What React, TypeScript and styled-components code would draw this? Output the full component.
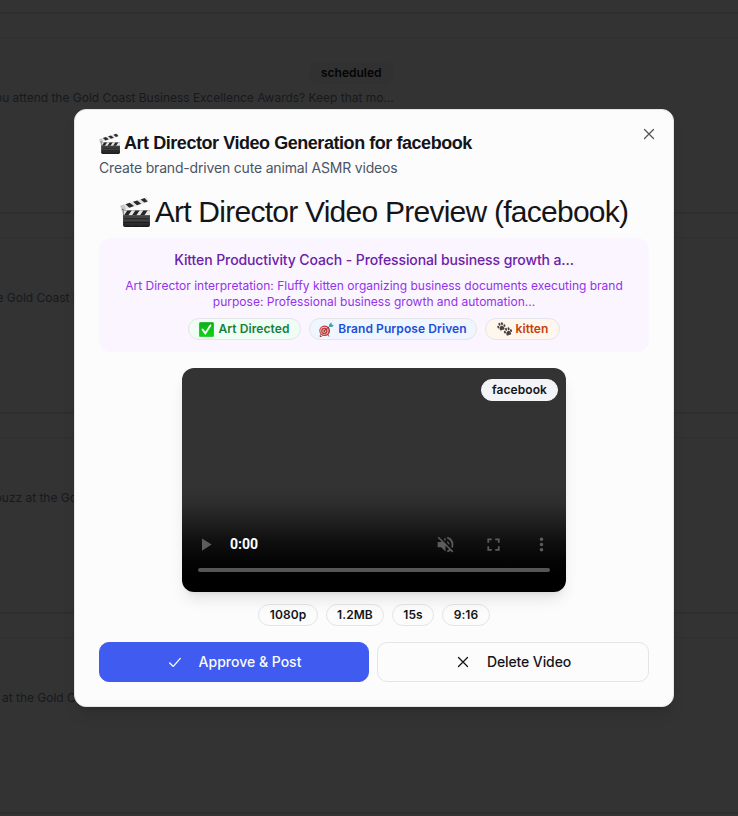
import React from 'react';
import styled, { createGlobalStyle } from 'styled-components';

const Global = createGlobalStyle`
  * { box-sizing: border-box; }
  body { margin: 0; background: #333; overflow: hidden; font-family: Inter, sans-serif; color: #141519; }
  h1, h2, h3, p { margin: 0; }
  button { font: inherit; }
`;

const Screen = styled.div`
  position: relative;
  width: 738px;
  height: 816px;
  overflow: hidden;
  background: #333;
`;
const Feed = styled.div`
  display: flex;
  flex-direction: column;
  gap: 24px;
  height: 816px;
  overflow: hidden;
`;
const Post = styled.article`
  flex: 0 0 176px;
  padding-top: 24px;
  border-top: 1px solid #2f2f30;
  border-bottom: 1px solid #2d2d2e;
  box-shadow: 0 1px 2px rgba(0, 0, 0, .05);
`;
const PostTail = styled(Post)`
  flex-basis: 13px;
  padding: 0;
  border-top: 0;
`;
const PostTop = styled.div`
  display: flex;
  height: 22px;
  padding-left: 309px;
`;
const Status = styled.span`
  height: 22px;
  padding: 0 12px;
  border-radius: 11px;
  background: #313131;
  color: #040405;
  font-size: 12px;
  font-weight: 600;
  line-height: 22px;
`;
const PostText = styled.p<{ $shift: number }>`
  margin: 6px 0 0 ${p => p.$shift}px;
  color: #17191d;
  font-size: 12px;
  line-height: 16px;
  white-space: nowrap;
  letter-spacing: -0.02px;
`;

const Overlay = styled.div`
  position: absolute;
  inset: 0 -10px 0 0;
  display: grid;
  place-items: center;
`;
const Dialog = styled.section`
  position: relative;
  display: flex;
  flex-direction: column;
  gap: 16px;
  width: 600px;
  height: 598px;
  padding: 24px;
  border: 1px solid #e4e5e8;
  border-radius: 12px;
  background: #fcfcfc;
  box-shadow: 0 10px 15px -3px rgba(0, 0, 0, .1), 0 4px 6px -4px rgba(0, 0, 0, .1);
`;
const CloseButton = styled.button`
  position: absolute;
  top: 16px;
  right: 16px;
  display: flex;
  padding: 0;
  border: 0;
  background: none;
  color: #55565a;
`;
const Header = styled.header`
  display: flex;
  flex-direction: column;
  gap: 6px;
`;
const Title = styled.h2`
  display: flex;
  align-items: center;
  gap: 4px;
  height: 18px;
  font: 700 18px/18px "Liberation Sans", sans-serif;
  letter-spacing: -0.45px;
  white-space: nowrap;
`;
const Subtitle = styled.p`
  color: #4b5565;
  font-size: 14px;
  line-height: 20px;
  letter-spacing: -0.18px;
`;
const Intro = styled.div`
  display: flex;
  flex-direction: column;
  gap: 8px;
`;
const Heading = styled.h1`
  display: flex;
  align-items: center;
  justify-content: center;
  gap: 5px;
  font: 400 30px/36px "Liberation Sans", sans-serif;
  letter-spacing: -0.75px;
  white-space: nowrap;
`;
const Brief = styled.div`
  display: flex;
  flex-direction: column;
  align-items: center;
  gap: 8px;
  height: 114px;
  padding: 12px;
  border-radius: 12px;
  background: #faf5ff;
  text-align: center;
`;
const BriefTitle = styled.h3`
  color: #6b21a8;
  font-size: 14px;
  font-weight: 500;
  line-height: 20px;
  letter-spacing: -0.1px;
`;
const BriefText = styled.p`
  color: #9333ea;
  font-size: 12px;
  line-height: 16px;
  letter-spacing: 0.01px;
  white-space: nowrap;
`;
const BadgeRow = styled.div`
  display: flex;
  justify-content: center;
  gap: 8px;
`;
const Badge = styled.span<{ $bg?: string; $color?: string; $width: number; $border?: string }>`
  display: inline-flex;
  align-items: center;
  justify-content: center;
  gap: 4px;
  width: ${p => p.$width}px;
  height: 22px;
  border: 1px solid ${p => p.$border ?? '#e4e5e8'};
  border-radius: 11px;
  background: ${p => p.$bg ?? 'transparent'};
  color: ${p => p.$color ?? '#141519'};
  font-size: 12px;
  font-weight: 600;
  line-height: 16px;
  letter-spacing: 0.08px;
  white-space: nowrap;
`;
const Player = styled.div`
  position: relative;
  display: flex;
  flex-direction: column;
  justify-content: flex-end;
  align-self: center;
  width: 384px;
  height: 224px;
  padding: 0 16px 20px;
  border-radius: 12px;
  background: linear-gradient(#333 0, #333 118px, #2d2d2d 136px, #1e1e1e 156px, #101010 172px, #050505 192px, #000 210px);
  box-shadow: 0 10px 15px -3px rgba(0, 0, 0, .1), 0 4px 6px -4px rgba(0, 0, 0, .1);
`;
const PlatformTag = styled.div`
  position: absolute;
  top: 11px;
  right: 8px;
  display: flex;
`;
const Controls = styled.div`
  display: flex;
  align-items: center;
  height: 24px;
  margin: 0 -2px 12px -3px;
  color: #5c5c5c;
`;
const Time = styled.span`
  flex: 1;
  margin-left: 14px;
  color: #fff;
  font: 700 14px/24px Roboto, sans-serif;
`;
const ControlIcons = styled.div`
  display: flex;
  gap: 27px;
`;
const Track = styled.div`
  height: 4px;
  border-radius: 2px;
  background: #555;
`;
const Footer = styled.footer`
  display: flex;
  flex-direction: column;
  gap: 16px;
  margin-top: -4px;
`;
const Actions = styled.div`
  display: grid;
  grid-template-columns: 270px 272px;
  gap: 8px;
`;
const Action = styled.button<{ $primary?: boolean }>`
  display: flex;
  align-items: center;
  justify-content: center;
  gap: 16px;
  height: 40px;
  padding: 0 0 1px;
  border: 1px solid ${p => (p.$primary ? '#405cf0' : '#e4e5e8')};
  border-radius: 10px;
  background: ${p => (p.$primary ? '#405cf0' : '#fcfcfc')};
  color: ${p => (p.$primary ? '#fbfbff' : '#141519')};
  font-size: 14px;
  font-weight: 500;
  letter-spacing: ${p => (p.$primary ? 0 : -0.1)}px;
`;

const Clapper = ({ size }: { size: number }) => (
  <svg width={size} height={size} viewBox="0 0 30 30">
    <defs>
      <linearGradient id={`slate${size}`} x2="0" y2="1">
        <stop stopColor="#202020" /><stop offset=".5" stopColor="#4c4c4c" /><stop offset="1" stopColor="#191919" />
      </linearGradient>
    </defs>
    <path d="M.3 8.8 27 .3l1.3 4.6L5 12.6l-3 2.2z" fill="#e4e4e2" />
    <path d="m5.5 7.2 4.2-1.4 4.3 3.3-4.6 1.6zM13 4.8l4.2-1.4 4 3.3-4.2 1.5zM20.6 2.4l4-1.3 3.1 3.3-3.4 1.2z" fill="#2b2b2b" />
    <path d="M.3 8.8 4 7.6l2.5 6L3 18z" fill="#c4c8c7" />
    <circle cx="2.8" cy="12.5" r=".8" fill="#555" />
    <path d="M3 13.5h27V28q0 2-2 2H5q-2 0-2-2z" fill={`url(#slate${size})`} />
    <path d="M3.5 13.5H30v4.7H3.5z" fill="#e6e6e4" />
    <path d="M7.3 13.5h4.3l-3.2 4.7H4.1zM15.3 13.5h4.3l-3.2 4.7h-4.3zM23.3 13.5h4.3l-3.2 4.7h-4.3z" fill="#262626" />
    <path d="M4 21.8h25M4 25.4h25" stroke="#171717" strokeWidth=".9" />
    <path d="M11 25.5V29M20 25.5V29" stroke="#333" strokeWidth=".7" />
  </svg>
);
const CheckEmoji = () => (
  <svg width="15" height="15" viewBox="0 0 15 15">
    <defs><linearGradient id="green" x2="0" y2="1"><stop stopColor="#0dae18" /><stop offset="1" stopColor="#08d90d" /></linearGradient></defs>
    <rect x=".2" y=".2" width="14.6" height="14.6" rx="1.5" fill="url(#green)" stroke="#20a42a" strokeWidth=".4" />
    <path d="m3.6 7.6 2.7 3.8 5.1-8" fill="none" stroke="#fff" strokeWidth="1.9" strokeLinecap="round" />
  </svg>
);
const TargetEmoji = () => (
  <svg width="15" height="15" viewBox="0 0 15 15">
    <path d="m1.5 12.5-.5 2h1.5l1-1M9 13l1 1.5" stroke="#9b493d" fill="none" />
    <ellipse cx="5.7" cy="8.8" rx="5.4" ry="5.2" fill="#c03434" />
    <ellipse cx="5.4" cy="8.8" rx="4.1" ry="4" fill="#e6cfcd" />
    <ellipse cx="5.3" cy="8.9" rx="3.2" ry="3.1" fill="#c33a3b" />
    <ellipse cx="5.2" cy="9" rx="1.8" ry="1.7" fill="#ead8d6" />
    <circle cx="5.2" cy="9" r=".9" fill="#b72b30" />
    <path d="m5.2 9 6.3-5.3" stroke="#44464a" strokeWidth=".9" />
    <path d="m10 4.8.2-2.6L12.4.6l.4 1.8 2 .8-1.8 1.8z" fill="#35a4bd" />
  </svg>
);
const Paw = ({ x, y }: { x: number; y: number }) => (
  <g transform={`translate(${x} ${y}) rotate(-16 4 4)`} fill="#494441">
    <ellipse cx="1.2" cy="4" rx="1" ry="1.4" /><ellipse cx="3.1" cy="1.6" rx="1" ry="1.5" />
    <ellipse cx="5.7" cy="1.7" rx="1" ry="1.5" /><ellipse cx="7.5" cy="4.2" rx="1" ry="1.4" />
    <path d="M4.4 3.6C2.5 3.6 1.2 7 2.4 7.8c.8.5 1.2 0 2 0s1.4.5 2.1 0C7.6 6.8 6.2 3.6 4.4 3.6z" />
  </g>
);
const PawsEmoji = () => (
  <svg width="15" height="15" viewBox="0 0 15 15"><Paw x={0} y={0.3} /><Paw x={6.6} y={5.4} /></svg>
);
const Cross = () => (
  <svg width="16" height="16" viewBox="0 0 16 16" fill="none" stroke="currentColor" strokeWidth="1.3">
    <path d="m3.5 3.5 9 9M12.5 3.5l-9 9" strokeLinecap="round" />
  </svg>
);
const CheckIcon = () => (
  <svg width="16" height="16" viewBox="0 0 16 16" fill="none" stroke="currentColor" strokeWidth="1.35">
    <path d="m2.7 8.9 3.6 3.5 7-8" strokeLinecap="round" strokeLinejoin="round" />
  </svg>
);
const MediaIcon = ({ d }: { d: string }) => (
  <svg width="21" height="21" viewBox="0 0 24 24" fill="currentColor"><path d={d} /></svg>
);

const posts = [
  { status: 'scheduled', text: 'ou attend the Gold Coast Business Excellence Awards? Keep that mo...', shift: -5 },
  { text: 'e Gold Coast Business Excellence Awards', shift: -3.5 },
  { text: 'buzz at the Gold Coast Business Excellence Awards', shift: -5.5 },
  { text: 'at the Gold Coast Business Excellence Awards', shift: 2 },
];

export default function App() {
  return (
    <>
      <Global />
      <Screen>
        <Feed>
          <PostTail />
          {posts.map(post => (
            <Post key={post.text}>
              <PostTop>{post.status && <Status>{post.status}</Status>}</PostTop>
              <PostText $shift={post.shift}>{post.text}</PostText>
            </Post>
          ))}
        </Feed>
        <Overlay>
          <Dialog role="dialog">
            <Header>
              <Title><Clapper size={21} />Art Director Video Generation for facebook</Title>
              <Subtitle>Create brand-driven cute animal ASMR videos</Subtitle>
            </Header>
            <Intro>
              <Heading><Clapper size={30} />Art Director Video Preview (facebook)</Heading>
              <Brief>
                <BriefTitle>Kitten Productivity Coach - Professional business growth a...</BriefTitle>
                <BriefText>
                  Art Director interpretation: Fluffy kitten organizing business documents executing brand
                  <br />purpose: Professional business growth and automation...
                </BriefText>
                <BadgeRow>
                  <Badge $width={113} $bg="#f0fdf4" $color="#15803d"><CheckEmoji />Art Directed</Badge>
                  <Badge $width={168} $bg="#eff6ff" $color="#1d4ed8"><TargetEmoji />Brand Purpose Driven</Badge>
                  <Badge $width={75} $bg="#fff7ed" $color="#c2410c"><PawsEmoji />kitten</Badge>
                </BadgeRow>
              </Brief>
            </Intro>
            <Player>
              <PlatformTag><Badge $width={77} $bg="#f3f4f7" $border="#f3f4f7">facebook</Badge></PlatformTag>
              <Controls>
                <MediaIcon d="M8 5v14l11-7z" />
                <Time>0:00</Time>
                <ControlIcons>
                  <MediaIcon d="M4.3 3 3 4.3 7.3 8.6 7 9H3v6h4l5 5v-6.7l4.2 4.2c-.7.5-1.4.9-2.2 1.2v2.1c1.3-.3 2.6-.9 3.6-1.8l2.1 2.1 1.3-1.3zM12 4 9.9 6.1 12 8.2zM14 3.2v2.1c2.9.9 5 3.5 5 6.7 0 .9-.2 1.8-.5 2.6l1.5 1.5c.6-1.2 1-2.6 1-4.1 0-4.3-3-7.9-7-8.8zM14 8v2.2l2.5 2.5V12c0-1.8-1-3.3-2.5-4z" />
                  <MediaIcon d="M7 14H5v5h5v-2H7v-3zm-2-4h2V7h3V5H5v5zm12 7h-3v2h5v-5h-2v3zM14 5v2h3v3h2V5h-5z" />
                  <MediaIcon d="M12 8c1.1 0 2-.9 2-2s-.9-2-2-2-2 .9-2 2 .9 2 2 2zm0 2c-1.1 0-2 .9-2 2s.9 2 2 2 2-.9 2-2-.9-2-2-2zm0 6c-1.1 0-2 .9-2 2s.9 2 2 2 2-.9 2-2-.9-2-2-2z" />
                </ControlIcons>
              </Controls>
              <Track />
            </Player>
            <Footer>
              <BadgeRow>
                <Badge $width={60}>1080p</Badge>
                <Badge $width={58}>1.2MB</Badge>
                <Badge $width={42}>15s</Badge>
                <Badge $width={48}>9:16</Badge>
              </BadgeRow>
              <Actions>
                <Action $primary><CheckIcon />Approve &amp; Post</Action>
                <Action><Cross />Delete Video</Action>
              </Actions>
            </Footer>
            <CloseButton aria-label="Close"><Cross /></CloseButton>
          </Dialog>
        </Overlay>
      </Screen>
    </>
  );
}
